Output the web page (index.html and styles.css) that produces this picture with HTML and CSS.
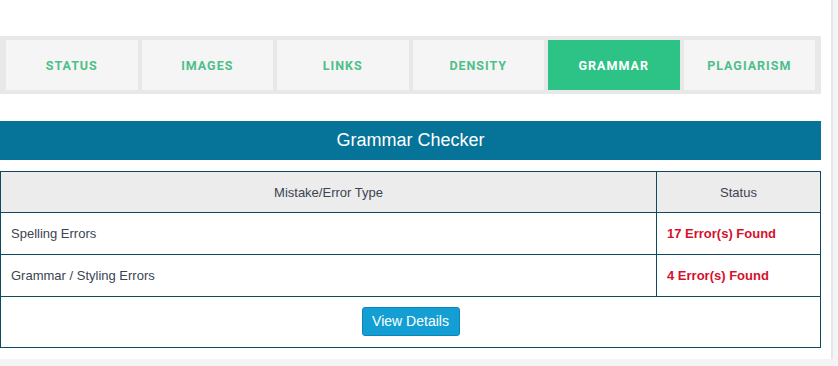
FILE: index.html
```html
<!DOCTYPE html>
<html>
<head>
<meta charset="utf-8">
<link rel="stylesheet" href="styles.css">
</head>
<body>
<div class="panel">
  <nav class="tabs">
    <div class="tab">STATUS</div>
    <div class="tab">IMAGES</div>
    <div class="tab">LINKS</div>
    <div class="tab">DENSITY</div>
    <div class="tab active">GRAMMAR</div>
    <div class="tab">PLAGIARISM</div>
  </nav>
  <h2 class="title">Grammar Checker</h2>
  <table class="report">
    <thead>
      <tr><th class="c-type">Mistake/Error Type</th><th class="c-status">Status</th></tr>
    </thead>
    <tbody>
      <tr><td>Spelling Errors</td><td class="err">17 Error(s) Found</td></tr>
      <tr><td>Grammar / Styling Errors</td><td class="err">4 Error(s) Found</td></tr>
      <tr><td colspan="2" class="actions"><button class="btn">View Details</button></td></tr>
    </tbody>
  </table>
</div>
</body>
</html>
```

FILE: styles.css
```css
html, body {
  margin: 0;
  padding: 0;
}
body {
  background: #f4f4f4;
  font-family: "Liberation Sans", Arial, sans-serif;
  width: 838px;
  height: 366px;
  overflow: hidden;
}
.panel {
  width: 833px;
  height: 359px;
  background: #fff;
  border-right: 2px solid #e6e6e6;
  box-sizing: border-box;
  padding-top: 36px;
}
.tabs {
  width: 821px;
  box-sizing: border-box;
  background: #e8e8e8;
  padding: 4px 6px;
  display: flex;
  gap: 4px;
}
.tab {
  flex: 1;
  height: 50px;
  background: #f5f5f5;
  color: #4dbf8a;
  font-family: Roboto, "Liberation Sans", sans-serif;
  font-weight: 700;
  font-size: 12.5px;
  letter-spacing: 1px;
  display: flex;
  align-items: center;
  justify-content: center;
}
.tab.active {
  background: #2dc286;
  color: #fff;
}
.title {
  width: 821px;
  margin: 27px 0 0;
  height: 39px;
  line-height: 39px;
  background: #067399;
  color: #fff;
  font-size: 18px;
  font-weight: 400;
  text-align: center;
}
.report {
  width: 821px;
  margin-top: 11px;
  border-collapse: collapse;
  font-size: 13px;
  color: #3b4452;
}
.report th, .report td {
  border: 1px solid #0f4a5e;
  height: 42px;
  padding: 0 10px;
  box-sizing: border-box;
}
.report th {
  background: #ececec;
  font-weight: 400;
  text-align: center;
  height: 41px;
}
.c-status {
  width: 164px;
}
.report td {
  text-align: left;
}
.report td.err {
  color: #d6102e;
  font-weight: 700;
}
.report td.actions {
  text-align: center;
  height: 51px;
  padding: 0 0 2px;
}
.btn {
  width: 98px;
  height: 29px;
  background: #139fd3;
  border: 1px solid #0b86b6;
  border-radius: 3px;
  color: #fff;
  font-family: "Liberation Sans", Arial, sans-serif;
  font-size: 14px;
  padding: 0;
  vertical-align: middle;
}
```
